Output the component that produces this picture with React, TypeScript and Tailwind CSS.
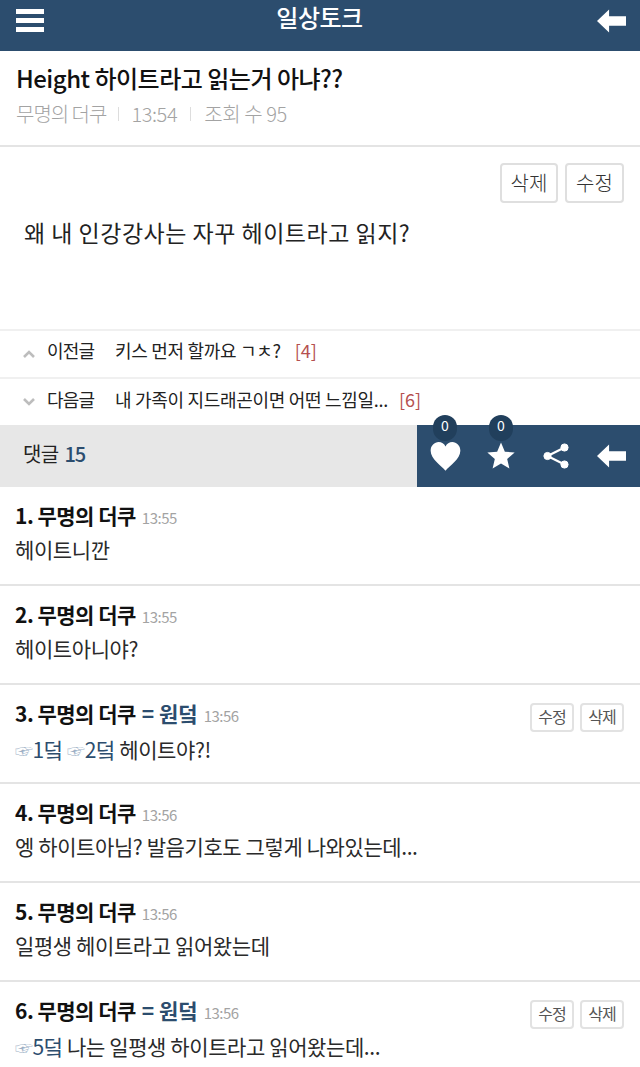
import React from "react";

const font = { fontFamily: '"Noto Sans CJK KR", "Noto Sans", sans-serif' };

function Arrow({ className }: { className: string }) {
  return (
    <svg viewBox="0 0 30 24" className={className} fill="white">
      <path d="M0 12 L12.5 0 L12.5 7 L30 7 L30 17 L12.5 17 L12.5 24 Z" />
    </svg>
  );
}

function Chevron({ up }: { up?: boolean }) {
  return (
    <svg viewBox="0 0 12 8" className="w-[12px] h-[8px] shrink-0" fill="none" stroke="#bdbdbd" strokeWidth="2.6">
      <path d={up ? "M1 7 L6 2 L11 7" : "M1 1 L6 6 L11 1"} />
    </svg>
  );
}

function SmallBtn({ children }: { children: React.ReactNode }) {
  return (
    <span className="w-[44px] h-[29px] flex items-center justify-center border-2 border-[#e2e2e2] rounded-[4px] text-[16px] tracking-[-1px] text-[#555] pb-[3px]">
      {children}
    </span>
  );
}

function Badge() {
  return (
    <span className="absolute left-1/2 -translate-x-1/2 top-[-10px] w-[24px] h-[26px] rounded-full bg-[#213f5c] text-white text-[14px] leading-[21px] text-center">
      0
    </span>
  );
}

type C = {
  n: number;
  time: string;
  won?: boolean;
  body: React.ReactNode;
};

const Ref = ({ children }: { children: React.ReactNode }) => (
  <span className="text-[#2c4d6e]">
    <span className="text-[#9db1c6] text-[18px]">☞</span>
    {children}
  </span>
);

const comments: C[] = [
  { n: 1, time: "13:55", body: "헤이트니깐" },
  { n: 2, time: "13:55", body: "헤이트아니야?" },
  { n: 3, time: "13:56", won: true, body: <><Ref>1덬</Ref> <Ref>2덬</Ref> 헤이트야?!</> },
  { n: 4, time: "13:56", body: "엥 하이트아님? 발음기호도 그렇게 나와있는데..." },
  { n: 5, time: "13:56", body: "일평생 헤이트라고 읽어왔는데" },
  { n: 6, time: "13:56", won: true, body: <><Ref>5덬</Ref> 나는 일평생 하이트라고 읽어왔는데...</> },
];

export default function App() {
  return (
    <div style={font} className="w-[640px] h-[1067px] overflow-hidden bg-white text-[#222]">
      <header className="h-[51px] bg-[#2c4d6e] flex items-start justify-between pl-[16px] pr-[14px]">
        <div className="flex flex-col gap-[4px] mt-[9px]">
          <span className="block w-[28px] h-[5px] bg-white" />
          <span className="block w-[28px] h-[5px] bg-white" />
          <span className="block w-[28px] h-[5px] bg-white" />
        </div>
        <h1 className="text-white text-[24px] font-medium leading-[34px] tracking-[-0.5px] -ml-[2px]">일상토크</h1>
        <Arrow className="w-[29px] h-[24px] mt-[9px]" />
      </header>

      <section className="h-[96px] border-b-2 border-[#e4e4e4] px-[16px] pt-[10px]">
        <h2 className="text-[24px] font-medium leading-[34px] text-[#111] tracking-[-0.5px]">Height 하이트라고 읽는거 아냐??</h2>
        <div className="flex items-center text-[20px] leading-[26px] mt-[6px] text-[#a3a3a3] font-light">
          <span className="tracking-[-1px]">무명의 더쿠</span>
          <span className="w-px h-[14px] bg-[#ddd] mx-[12px]" />
          <span className="tracking-[-0.4px]">13:54</span>
          <span className="w-px h-[14px] bg-[#ddd] mx-[13px]" />
          <span className="tracking-[-0.4px]">조회 수 95</span>
        </div>
      </section>

      <section className="h-[184px] border-b-2 border-[#f0f0f0] px-[24px] pt-[16px]">
        <div className="flex justify-end gap-[7px] -mr-[8px]">
          <span className="w-[58px] h-[40px] flex items-center justify-center border-2 border-[#dfdfdf] rounded-[4px] text-[20px] font-light text-[#333]">삭제</span>
          <span className="w-[59px] h-[40px] flex items-center justify-center border-2 border-[#dfdfdf] rounded-[4px] text-[20px] font-light text-[#333]">수정</span>
        </div>
        <p className="text-[23px] leading-[34px] mt-[12px] text-[#222] tracking-[0.5px]">왜 내 인강강사는 자꾸 헤이트라고 읽지?</p>
      </section>

      <nav className="text-[18px] text-[#222]">
        <div className="h-[48px] border-b-2 border-[#f0f0f0] flex items-center pl-[23px]">
          <Chevron up />
          <div className="flex items-center mb-[8px]">
            <span className="ml-[12px] w-[68px] tracking-[-0.8px]">이전글</span>
            <span className="tracking-[-0.3px]">키스 먼저 할까요 ㄱㅊ?</span>
            <span className="ml-[14px] text-[#b5504f]">[4]</span>
          </div>
        </div>
        <div className="h-[46px] flex items-center pl-[23px]">
          <Chevron />
          <div className="flex items-center mb-[6px]">
            <span className="ml-[12px] w-[68px] tracking-[-0.8px]">다음글</span>
            <span className="tracking-[-0.3px]">내 가족이 지드래곤이면 어떤 느낌일...</span>
            <span className="ml-[11px] text-[#b5504f]">[6]</span>
          </div>
        </div>
      </nav>

      <div className="h-[62px] flex">
        <div className="w-[417px] bg-[#e7e7e7] flex items-center pl-[23px] pb-[4px] text-[20px] tracking-[-0.7px]">
          댓글 <span className="ml-[6px] text-[#2c4d6e] font-medium tracking-[-1px]">15</span>
        </div>
        <div className="flex-1 bg-[#2c4d6e] flex items-center pl-[13px]">
          <div className="relative w-[30px] h-[62px] flex items-center justify-center">
            <Badge />
            <svg viewBox="0 0 24 24" className="w-[31px] h-[31px] shrink-0" fill="white">
              <path d="M12 23 C9 19 0.5 14 0.5 7.5 C0.5 3.5 3.5 0.8 6.7 0.8 C9 0.8 11 2 12 4.2 C13 2 15 0.8 17.3 0.8 C20.5 0.8 23.5 3.5 23.5 7.5 C23.5 14 15 19 12 23 Z" />
            </svg>
          </div>
          <div className="relative w-[30px] h-[62px] flex items-center justify-center ml-[26px]">
            <Badge />
            <svg viewBox="0 0 24 24" className="w-[28px] h-[28px] shrink-0" fill="white">
              <path d="M12 0.5 L15.3 8.3 L23.7 9 L17.3 14.5 L19.2 22.8 L12 18.4 L4.8 22.8 L6.7 14.5 L0.3 9 L8.7 8.3 Z" />
            </svg>
          </div>
          <svg viewBox="0 0 26 26" className="w-[26px] h-[26px] ml-[27px]" fill="white" stroke="white">
            <circle cx="4.5" cy="13" r="3.6" />
            <circle cx="21.5" cy="4.5" r="3.6" />
            <circle cx="21.5" cy="21.5" r="3.6" />
            <path d="M4.5 13 L21.5 4.5 M4.5 13 L21.5 21.5" strokeWidth="2.2" fill="none" />
          </svg>
          <Arrow className="w-[29px] h-[24px] ml-[28px]" />
        </div>
      </div>

      <div>
        {comments.map((c) => (
          <article key={c.n} className="h-[99px] border-b-2 border-[#e4e4e4] px-[16px] pt-[13px] relative">
            <div className="flex items-baseline -ml-[1px]">
              <strong className="text-[21px] leading-[30px] font-bold text-[#111] tracking-[-0.5px]">{c.n}. 무명의 더쿠</strong>
              {c.won && <strong className="ml-[6px] text-[21px] font-bold text-[#2c4d6e] tracking-[0px]">= 원덬</strong>}
              <span className="ml-[6px] text-[15px] text-[#a3a3a3] tracking-[-0.5px]">{c.time}</span>
            </div>
            <p className="text-[21px] leading-[30px] mt-[4px] -ml-[1px] text-[#2a2a2a] tracking-[-0.4px]">{c.body}</p>
            {c.won && (
              <div className="absolute right-[16px] top-[18px] flex gap-[6px]">
                <SmallBtn>수정</SmallBtn>
                <SmallBtn>삭제</SmallBtn>
              </div>
            )}
          </article>
        ))}
      </div>
    </div>
  );
}
